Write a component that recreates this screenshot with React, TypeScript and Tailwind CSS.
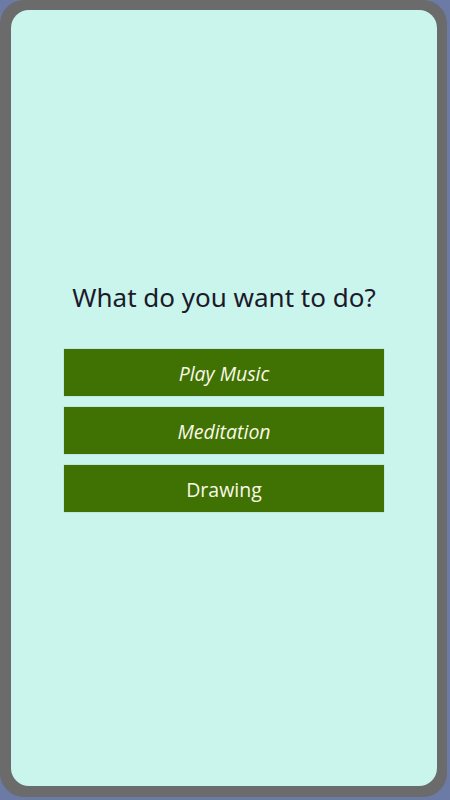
export default function App() {
  const options = [
    { label: 'Play Music', italic: true },
    { label: 'Meditation', italic: true },
    { label: 'Drawing', italic: false },
  ]

  return (
    <div className="w-[450px] h-[800px] bg-[#6c7ba6]">
      <div className="w-[447px] h-[797px] rounded-[24px] bg-[#6b6b6b] pl-[11px] pr-[10px] pt-[10px] pb-[11px]">
        <div className="h-full rounded-[18px] bg-[#c9f5ec] flex flex-col items-center justify-center">
          <h1 className="font-['Noto_Sans',sans-serif] text-[26px] leading-none text-[#1c1a2a] mb-[39px]">
            What do you want to do?
          </h1>
          <div className="flex flex-col gap-[11px]">
            {options.map((o) => (
              <button
                key={o.label}
                className={`w-[320px] h-[47px] pt-[3px] bg-[#3f7203] shadow-[0_0_1px_#8aa] text-[#fbf8e6] text-[19.5px] font-medium font-['Open_Sans',sans-serif] ${o.italic ? 'italic' : ''}`}
              >
                {o.label}
              </button>
            ))}
          </div>
        </div>
      </div>
    </div>
  )
}
